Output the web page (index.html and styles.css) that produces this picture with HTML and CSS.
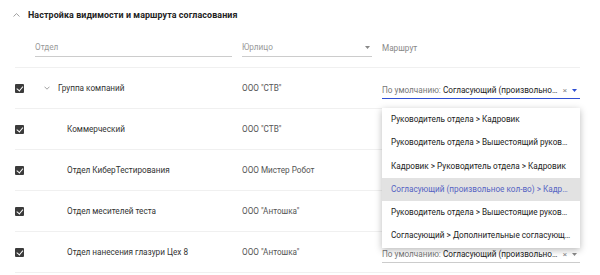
FILE: index.html
```html
<!DOCTYPE html>
<html lang="ru">
<head>
    <meta charset="UTF-8">
    <title>Настройка видимости и маршрута согласования</title>
    <link rel="stylesheet" href="styles.css">
</head>
<body>
    <div class="section">
        <div class="section-head">
            <svg class="chev-up" width="7" height="4" viewBox="0 0 7 4"><path d="M0.5 3.5 L3.5 0.6 L6.5 3.5" fill="none" stroke="#888" stroke-width="0.8"/></svg>
            <span class="section-title">Настройка видимости и маршрута согласования</span>
        </div>

        <div class="grid filters">
            <div></div>
            <div class="field">Отдел</div>
            <div class="field">Юрлицо<svg class="tri" width="5" height="3" viewBox="0 0 5 3"><path d="M0 0 H5 L2.5 3 Z" fill="#888"/></svg></div>
            <div class="label">Маршрут</div>
        </div>

        <div class="grid row">
            <div class="check"></div>
            <div class="name lvl0"><svg class="chev-down" width="6" height="4" viewBox="0 0 6 4"><path d="M0.5 0.7 L3 3.2 L5.5 0.7" fill="none" stroke="#888" stroke-width="0.8"/></svg>Группа компаний</div>
            <div class="org">ООО "СТВ"</div>
            <div class="route-cell">
                <div class="select active"><span class="sel-text"><span class="muted">По умолчанию:</span> Согласующий (произвольное кол-во) &gt; Кадровик</span><span class="clear">×</span><svg class="tri" width="5" height="3" viewBox="0 0 5 3"><path d="M0 0 H5 L2.5 3 Z" fill="#2f4fd3"/></svg></div>
                <ul class="menu">
                    <li>Руководитель отдела &gt; Кадровик</li>
                    <li>Руководитель отдела &gt; Вышестоящий руководитель</li>
                    <li>Кадровик &gt; Руководитель отдела &gt; Кадровик</li>
                    <li class="hover">Согласующий (произвольное кол-во) &gt; Кадровик</li>
                    <li>Руководитель отдела &gt; Вышестоящие руководители</li>
                    <li>Согласующий &gt; Дополнительные согласующие</li>
                </ul>
            </div>
        </div>

        <div class="grid row">
            <div class="check"></div>
            <div class="name lvl1">Коммерческий</div>
            <div class="org">ООО "СТВ"</div>
            <div class="route-cell"></div>
        </div>

        <div class="grid row">
            <div class="check"></div>
            <div class="name lvl1">Отдел КиберТестирования</div>
            <div class="org">ООО Мистер Робот</div>
            <div class="route-cell"></div>
        </div>

        <div class="grid row">
            <div class="check"></div>
            <div class="name lvl1">Отдел месителей теста</div>
            <div class="org">ООО "Антошка"</div>
            <div class="route-cell"></div>
        </div>

        <div class="grid row">
            <div class="check"></div>
            <div class="name lvl1">Отдел нанесения глазури Цех 8</div>
            <div class="org">ООО "Антошка"</div>
            <div class="route-cell">
                <div class="select"><span class="sel-text"><span class="muted">По умолчанию:</span> Согласующий (произвольное кол-во) &gt; Кадровик</span><span class="clear">×</span><svg class="tri" width="5" height="3" viewBox="0 0 5 3"><path d="M0 0 H5 L2.5 3 Z" fill="#888"/></svg></div>
            </div>
        </div>
    </div>
</body>
</html>
```

FILE: styles.css
```css
html, body {
    margin: 0;
    padding: 0;
    background: #fff;
}
body {
    font-family: Roboto, "Noto Sans", sans-serif;
    font-size: 8.2px;
    color: #333;
}
.section {
    width: 565px;
    margin-left: 15px;
}
.section-head {
    height: 30px;
    display: flex;
    align-items: center;
    gap: 8px;
    margin-left: -2px;
}
.chev-up {
    display: block;
}
.section-title {
    font-size: 8.9px;
    font-weight: 700;
    color: #222;
    letter-spacing: 0.1px;
}
.grid {
    display: grid;
    grid-template-columns: 10px 197px 130px 198px;
    column-gap: 10px;
    align-items: center;
}
.filters {
    padding-top: 12px;
    padding-bottom: 10px;
    border-bottom: 1px solid #f0f0f0;
    align-items: end;
}
.field {
    display: flex;
    justify-content: space-between;
    align-items: flex-start;
    color: #999;
    height: 14px;
    border-bottom: 1px solid #ccc;
}
.field .tri {
    margin: 4px 2px 0 0;
}
.label {
    color: #888;
    height: 14px;
}
.row {
    height: 40px;
    border-bottom: 1px solid #f0f0f0;
}
.check {
    width: 9px;
    height: 9px;
    background: #3b3b3b;
    border-radius: 1px;
    position: relative;
}
.check::after {
    content: "";
    position: absolute;
    left: 2.5px;
    top: 1.5px;
    width: 3px;
    height: 4.5px;
    border: solid #fff;
    border-width: 0 1px 1px 0;
    transform: rotate(40deg);
}
.name {
    color: #333;
    display: flex;
    align-items: center;
}
.lvl0 {
    padding-left: 9px;
}
.lvl1 {
    padding-left: 32px;
}
.chev-down {
    margin-right: 8px;
}
.org {
    color: #555;
}
.route-cell {
    position: relative;
    align-self: stretch;
    display: flex;
    align-items: center;
}
.select {
    width: 100%;
    display: flex;
    align-items: center;
    height: 15px;
    margin-top: 5px;
    border-bottom: 1px solid #ccc;
    color: #222;
}
.select.active {
    border-bottom-color: #2f4fd3;
}
.sel-text {
    flex: 1;
    min-width: 0;
    white-space: nowrap;
    overflow: hidden;
    text-overflow: ellipsis;
}
.muted {
    color: #777;
}
.clear {
    color: #888;
    font-size: 8px;
    margin: 0 5px 0 4px;
}
.select .tri {
    margin-right: 3px;
}
.menu {
    position: absolute;
    top: 40px;
    left: 0;
    width: 198px;
    margin: 0;
    padding: 0;
    list-style: none;
    background: #fff;
    box-shadow: 0 2px 7px rgba(0, 0, 0, 0.28);
    z-index: 5;
}
.menu li {
    height: 23.3px;
    line-height: 23.3px;
    padding: 0 9px;
    color: #222;
    white-space: nowrap;
    overflow: hidden;
    text-overflow: ellipsis;
}
.menu li.hover {
    background: #e2e2e2;
    color: #5562c2;
}
```
